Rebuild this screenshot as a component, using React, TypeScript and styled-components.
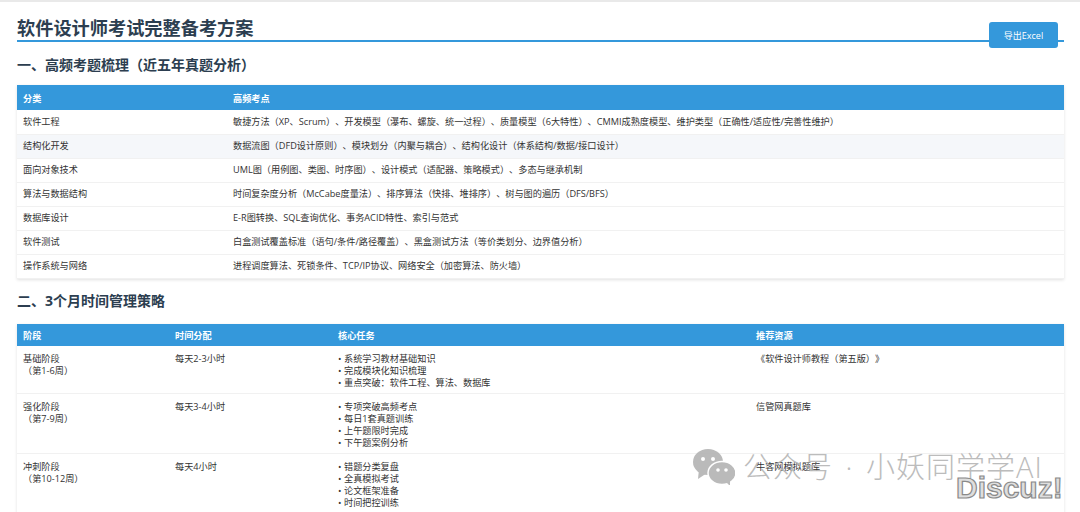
import React, { FC } from 'react';
import styled, { createGlobalStyle } from 'styled-components';

const GlobalStyle = createGlobalStyle`
  html, body {
    margin: 0;
    padding: 0;
    background: #fff;
    overflow: hidden;
  }
  body {
    font-family: "Open Sans", "Noto Sans CJK SC", sans-serif;
    text-spacing-trim: space-all;
  }
`;

const Page = styled.div`
  position: relative;
  width: 1080px;
  height: 512px;
  overflow: hidden;
  box-sizing: border-box;
  padding: 2px 16px 0 17px;
  border-top: 2px solid #e9e9e9;
  color: #333;
`;

const Title = styled.h1`
  margin: 13px 0 0;
  height: 23px;
  font-size: 18.2px;
  line-height: 23px;
  font-weight: 700;
  color: #2c3e50;
  border-bottom: 2px solid #3498db;
`;

const ExportButton = styled.button`
  position: absolute;
  left: 989px;
  top: 20px;
  width: 69px;
  height: 26px;
  padding: 0;
  border: none;
  border-radius: 3px;
  background: #3498db;
  color: #fff;
  font-family: inherit;
  font-size: 9px;
`;

const SectionTitle = styled.h2<{ $gap: number }>`
  margin: ${p => p.$gap}px 0 0;
  height: 20px;
  font-size: 14px;
  line-height: 20px;
  font-weight: 700;
  color: #2c3e50;
`;

const Table = styled.table<{ $gap: number }>`
  width: 100%;
  margin-top: ${p => p.$gap}px;
  border-collapse: collapse;
  table-layout: fixed;
  box-shadow: 0 1px 3px rgba(0, 0, 0, 0.12);
`;

const HeadCell = styled.th<{ $width?: number }>`
  width: ${p => (p.$width ? `${p.$width}px` : 'auto')};
  padding: 0 6px;
  height: 25px;
  background: #3498db;
  color: #fff;
  font-size: 9.17px;
  font-weight: 700;
  text-align: left;
`;

const SlimHeadCell = styled(HeadCell)`
  height: 22px;
`;

// the second row of the first table is the hovered one in the reference
const Row = styled.tr<{ $hovered?: boolean }>`
  background: ${p => (p.$hovered ? '#f5f7fa' : '#fff')};
`;

const Cell = styled.td`
  height: 24px;
  box-sizing: border-box;
  padding: 0 6px;
  border-bottom: 1px solid #f1f1f1;
  font-size: 9.17px;
  line-height: 12px;
  vertical-align: middle;
  white-space: nowrap;
`;

const TopCell = styled(Cell)`
  padding: 7px 6px 4px;
  vertical-align: top;
`;

const Tasks = styled.ul`
  list-style: none;
  margin: 0;
  padding: 0;
`;

const Task = styled.li`
  &::before {
    content: "•";
    display: inline-block;
    width: 4px;
    margin-right: 2px;
  }
`;

const Watermark = styled.div`
  position: absolute;
  left: 693px;
  top: 447px;
  display: flex;
  align-items: center;
  gap: 8px;
  color: #b5b5b5;
  font-size: 29px;
  line-height: 36px;
  font-weight: 300;
  letter-spacing: 1px;
  word-spacing: 4px;
  white-space: nowrap;
  opacity: 0.9;
`;

const Discuz = styled.div`
  position: absolute;
  left: 956px;
  top: 468px;
  font-family: "Liberation Sans", sans-serif;
  font-size: 30px;
  line-height: 36px;
  font-weight: 700;
  color: #dedede;
  -webkit-text-stroke: 1.2px #8a8a8a;
`;

const WeChatLogo: FC = () => (
  <svg width="42" height="36" viewBox="0 0 42 36" fill="#b3b3b3">
    <ellipse cx="15" cy="13" rx="15" ry="13" />
    <path d="M6 20 L5 30 L14 24 Z" />
    <ellipse cx="29" cy="24" rx="14" ry="11.500" stroke="#fff" strokeWidth="1.500" />
    <path d="M33 33 L37 37 L37 29 Z" />
    <circle cx="10" cy="10" r="2" fill="#fff" />
    <circle cx="20" cy="10" r="2" fill="#fff" />
    <circle cx="25" cy="21" r="1.800" fill="#fff" />
    <circle cx="33" cy="21" r="1.800" fill="#fff" />
  </svg>
);

const topics = [
  ['软件工程', '敏捷方法（XP、Scrum）、开发模型（瀑布、螺旋、统一过程）、质量模型（6大特性）、CMMI成熟度模型、维护类型（正确性/适应性/完善性维护）'],
  ['结构化开发', '数据流图（DFD设计原则）、模块划分（内聚与耦合）、结构化设计（体系结构/数据/接口设计）'],
  ['面向对象技术', 'UML图（用例图、类图、时序图）、设计模式（适配器、策略模式）、多态与继承机制'],
  ['算法与数据结构', '时间复杂度分析（McCabe度量法）、排序算法（快排、堆排序）、树与图的遍历（DFS/BFS）'],
  ['数据库设计', 'E-R图转换、SQL查询优化、事务ACID特性、索引与范式'],
  ['软件测试', '白盒测试覆盖标准（语句/条件/路径覆盖）、黑盒测试方法（等价类划分、边界值分析）'],
  ['操作系统与网络', '进程调度算法、死锁条件、TCP/IP协议、网络安全（加密算法、防火墙）'],
];

const phases = [
  {
    name: '基础阶段',
    weeks: '（第1-6周）',
    time: '每天2-3小时',
    tasks: ['系统学习教材基础知识', '完成模块化知识梳理', '重点突破：软件工程、算法、数据库'],
    source: '《软件设计师教程（第五版）》',
  },
  {
    name: '强化阶段',
    weeks: '（第7-9周）',
    time: '每天3-4小时',
    tasks: ['专项突破高频考点', '每日1套真题训练', '上午题限时完成', '下午题案例分析'],
    source: '信管网真题库',
  },
  {
    name: '冲刺阶段',
    weeks: '（第10-12周）',
    time: '每天4小时',
    tasks: ['错题分类复盘', '全真模拟考试', '论文框架准备', '时间把控训练'],
    source: '牛客网模拟题库',
  },
];

export default function App() {
  return (
    <Page>
      <GlobalStyle />
      <Title>软件设计师考试完整备考方案</Title>
      <ExportButton>导出Excel</ExportButton>

      <SectionTitle $gap={13}>一、高频考题梳理（近五年真题分析）</SectionTitle>
      <Table $gap={10}>
        <thead>
          <tr>
            <HeadCell $width={198}>分类</HeadCell>
            <HeadCell>高频考点</HeadCell>
          </tr>
        </thead>
        <tbody>
          {topics.map(([name, points], i) => (
            <Row key={name} $hovered={i === 1}>
              <Cell>{name}</Cell>
              <Cell>{points}</Cell>
            </Row>
          ))}
        </tbody>
      </Table>

      <SectionTitle $gap={12}>二、3个月时间管理策略</SectionTitle>
      <Table $gap={13}>
        <thead>
          <tr>
            <SlimHeadCell $width={140}>阶段</SlimHeadCell>
            <SlimHeadCell $width={151}>时间分配</SlimHeadCell>
            <SlimHeadCell $width={406}>核心任务</SlimHeadCell>
            <SlimHeadCell>推荐资源</SlimHeadCell>
          </tr>
        </thead>
        <tbody>
          {phases.map(phase => (
            <Row key={phase.name}>
              <TopCell>{phase.name}<br />{phase.weeks}</TopCell>
              <TopCell>{phase.time}</TopCell>
              <TopCell>
                <Tasks>
                  {phase.tasks.map(task => <Task key={task}>{task}</Task>)}
                </Tasks>
              </TopCell>
              <TopCell>{phase.source}</TopCell>
            </Row>
          ))}
        </tbody>
      </Table>

      <Watermark>
        <WeChatLogo />
        <span>公众号 · 小妖同学学AI</span>
      </Watermark>
      <Discuz>Discuz!</Discuz>
    </Page>
  );
}
